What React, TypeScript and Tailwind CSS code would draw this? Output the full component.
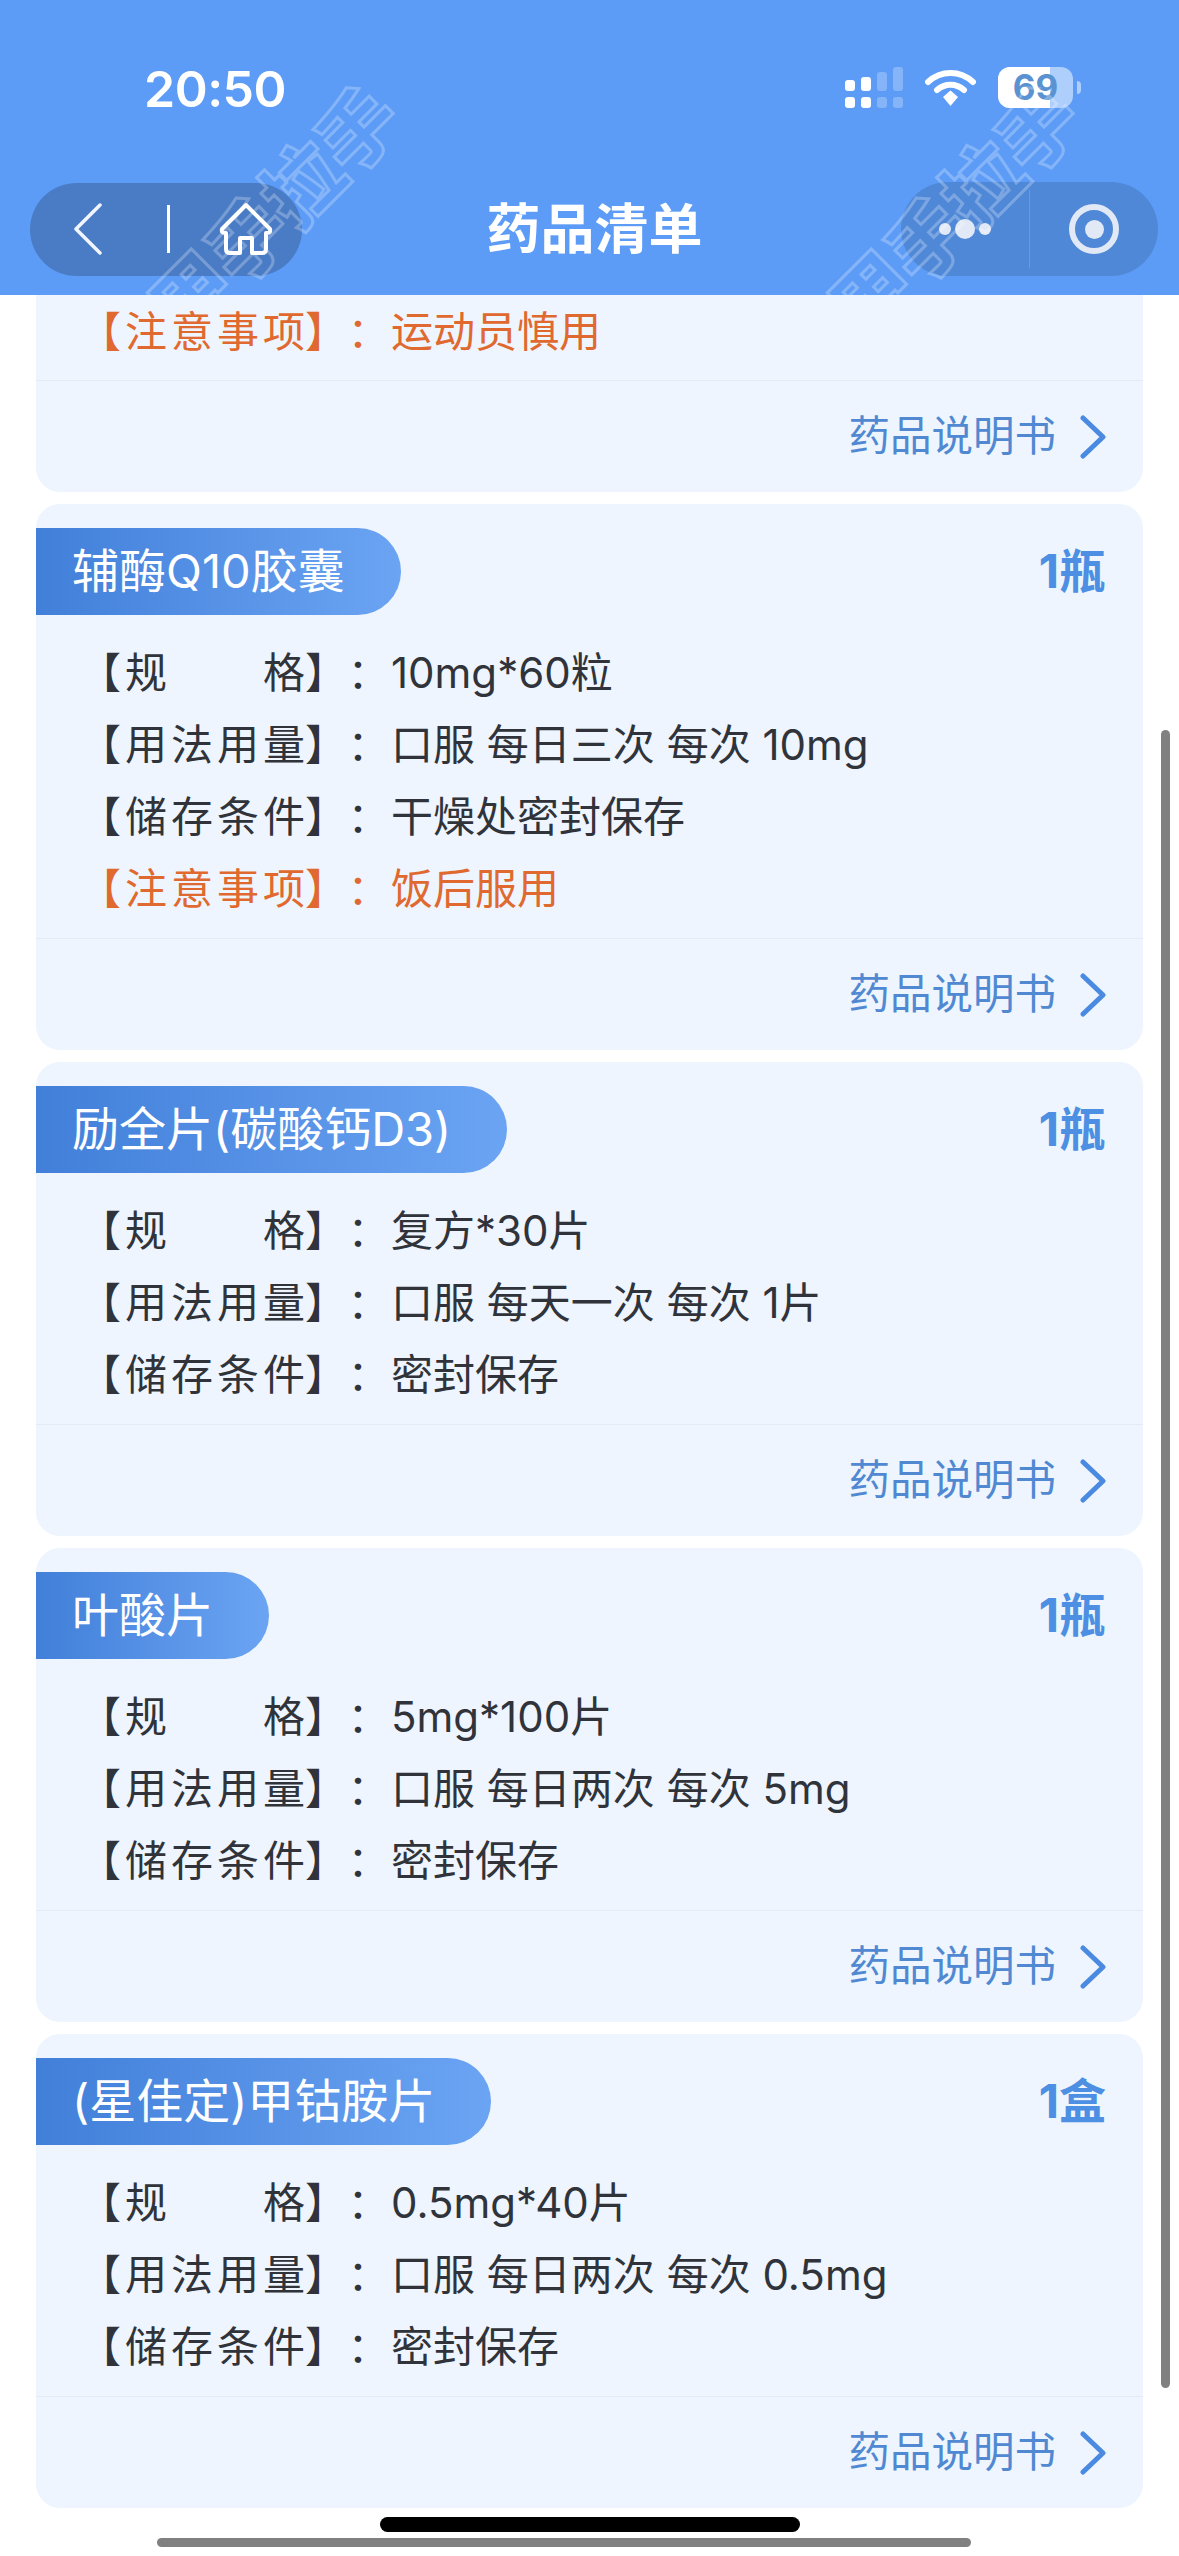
import React from 'react';

const FONT = "font-['Inter','Noto_Sans_CJK_SC',sans-serif]";

type Row = { label: string; value: string; warn?: boolean };
type Drug = { name: string; qty: string; rows: Row[] };

const drugs: Drug[] = [
  {
    name: '辅酶Q10胶囊',
    qty: '1瓶',
    rows: [
      { label: '【规　　格', value: '10mg*60粒' },
      { label: '【用法用量', value: '口服 每日三次 每次 10mg' },
      { label: '【储存条件', value: '干燥处密封保存' },
      { label: '【注意事项', value: '饭后服用', warn: true },
    ],
  },
  {
    name: '励全片(碳酸钙D3)',
    qty: '1瓶',
    rows: [
      { label: '【规　　格', value: '复方*30片' },
      { label: '【用法用量', value: '口服 每天一次 每次 1片' },
      { label: '【储存条件', value: '密封保存' },
    ],
  },
  {
    name: '叶酸片',
    qty: '1瓶',
    rows: [
      { label: '【规　　格', value: '5mg*100片' },
      { label: '【用法用量', value: '口服 每日两次 每次 5mg' },
      { label: '【储存条件', value: '密封保存' },
    ],
  },
  {
    name: '(星佳定)甲钴胺片',
    qty: '1盒',
    rows: [
      { label: '【规　　格', value: '0.5mg*40片' },
      { label: '【用法用量', value: '口服 每日两次 每次 0.5mg' },
      { label: '【储存条件', value: '密封保存' },
    ],
  },
];

const InfoRow = ({ label, value, warn }: Row) => (
  <div className={`flex h-[72px] items-center pl-[43px] text-[42px] ${warn ? 'text-[#e0692f]' : 'text-[#30343a]'}`}>
    <span className="w-[258px] shrink-0 whitespace-pre">
      <span className="tracking-[4px]">{label}</span>
      <span className="-ml-[4px]">】</span>
    </span>
    <span className="w-[42px] shrink-0 text-center font-['Noto_Sans_CJK_TC',sans-serif]">：</span>
    <span className="pl-[12px] whitespace-pre">{value}</span>
  </div>
);

const LinkRow = () => (
  <div className="flex h-[112px] items-center justify-end gap-[24px] border-t border-[#e5ebf4] pr-[37px]">
    <span className="text-[41.5px] text-[#5089d2]">药品说明书</span>
    <svg width="26" height="44" viewBox="0 0 26 44" fill="none">
      <path d="M3 3 L23 22 L3 41" stroke="#4a8ae0" strokeWidth="5" strokeLinecap="round" strokeLinejoin="round" />
    </svg>
  </div>
);

const DrugCard = ({ drug }: { drug: Drug }) => (
  <div className="mt-[12px] overflow-hidden rounded-[24px] bg-[#eef5fe]">
    <div className="flex items-center justify-between pt-[24px] pr-[37px]">
      <div className="flex h-[87px] items-center rounded-r-[44px] bg-gradient-to-r from-[#417fd9] to-[#6ba4f3] pr-[56px] pl-[36px] text-[47px] text-white">
        {drug.name}
      </div>
      <span className="text-[47px] font-bold text-[#4c8fe3]">{drug.qty}</span>
    </div>
    <div className="pt-[21px] pb-[14px]">
      {drug.rows.map((r) => (
        <InfoRow key={r.label} {...r} />
      ))}
    </div>
    <LinkRow />
  </div>
);

const StatusIcons = () => (
  <div className="flex items-center">
    <svg width="58" height="41" viewBox="0 0 58 41" fill="white">
      <rect x="0" y="13" width="10" height="11" rx="3" />
      <rect x="16" y="10" width="10" height="14" rx="3" />
      <rect x="32" y="5" width="10" height="19" rx="3" fillOpacity="0.25" />
      <rect x="48" y="0" width="10" height="24" rx="3" fillOpacity="0.25" />
      <rect x="0" y="30" width="10" height="11" rx="3" />
      <rect x="16" y="30" width="10" height="11" rx="3" />
      <rect x="32" y="30" width="10" height="11" rx="3" fillOpacity="0.25" />
      <rect x="48" y="30" width="10" height="11" rx="3" fillOpacity="0.25" />
    </svg>
    <svg className="ml-[22px]" width="51" height="37" viewBox="0 0 51 37" fill="none">
      <path d="M3 13 C16 1 35 1 48 13" stroke="white" strokeWidth="6" strokeLinecap="round" />
      <path d="M12 21 C20 14 31 14 39 21" stroke="white" strokeWidth="6" strokeLinecap="round" />
      <path d="M18 28 L25.5 21.5 L33 28 L25.5 37 Z" fill="white" />
    </svg>
    <div className="relative ml-[22px] h-[41px] w-[75px] overflow-hidden rounded-[12px] bg-white/50">
      <div className="h-full w-[52px] bg-white" />
      <span className="absolute inset-0 flex items-center justify-center text-[35px] leading-none font-bold text-[#5b93d2]">69</span>
    </div>
    <div className="ml-[4px] h-[13px] w-[4px] rounded-r-full bg-white/50" />
  </div>
);

const LeftCapsule = () => (
  <div className="flex h-[93px] w-[272px] items-center rounded-full bg-[#4a7cc6]">
    <svg className="ml-[43px]" width="30" height="52" viewBox="0 0 30 52" fill="none">
      <path d="M27 2 L3 26 L27 50" stroke="#f2f6fc" strokeWidth="3.5" strokeLinecap="round" strokeLinejoin="round" />
    </svg>
    <div className="ml-[64px] h-[48px] w-[3px] bg-white" />
    <svg className="ml-[49px]" width="54" height="54" viewBox="0 0 54 54" fill="none">
      <path
        d="M27 3 L51 27 Q52 31 48 31 L47 31 L47 47 Q47 51 43 51 L33 51 L33 36 L21 36 L21 51 L11 51 Q7 51 7 47 L7 31 L6 31 Q2 31 3 27 Z"
        stroke="white"
        strokeWidth="4"
        strokeLinejoin="round"
      />
    </svg>
  </div>
);

const RightCapsule = () => (
  <div className="flex h-[94px] w-[257px] items-center rounded-full bg-[#5088d8]">
    <div className="flex flex-1 items-center justify-center gap-[4px]">
      <div className="h-[12px] w-[12px] rounded-full bg-[#e2e9f6]" />
      <div className="h-[20px] w-[20px] rounded-full bg-[#e2e9f6]" />
      <div className="h-[12px] w-[12px] rounded-full bg-[#e2e9f6]" />
    </div>
    <div className="h-[78px] w-px bg-white/15" />
    <div className="flex flex-1 items-center justify-center">
      <div className="flex h-[50px] w-[50px] items-center justify-center rounded-full border-[6px] border-[#e2e9f6]">
        <div className="h-[19px] w-[19px] rounded-full bg-[#e2e9f6]" />
      </div>
    </div>
  </div>
);

const Watermark = ({ className }: { className: string }) => (
  <span
    className={`absolute -rotate-45 whitespace-nowrap text-[78px] leading-none font-black text-transparent [-webkit-text-stroke:3px_rgba(255,255,255,0.25)] ${className}`}
  >
    甲手拉手
  </span>
);

const Header = () => (
  <header className="relative h-[295px] shrink-0 overflow-hidden bg-[#5c9cf6] text-white">
    <div className="flex h-[41px] translate-y-[68px] items-center justify-between pr-[98px] pl-[144px]">
      <span className="text-[50px] leading-none font-semibold tracking-[-0.5px]">20:50</span>
      <div className="-translate-y-[1px]">
        <StatusIcons />
      </div>
    </div>
    <div className="mt-[141px] flex items-center pr-[21px] pl-[30px]">
      <LeftCapsule />
      <div className="flex-1 pr-[14px] text-center text-[54px] font-bold">药品清单</div>
      <RightCapsule />
    </div>
    <Watermark className="top-[174px] left-[120px]" />
    <Watermark className="top-[174px] left-[800px]" />
  </header>
);

export default function App() {
  return (
    <div className={`relative h-[2556px] w-[1179px] overflow-hidden bg-white ${FONT}`}>
      <Header />
      <main className="px-[36px]">
        <div className="overflow-hidden rounded-b-[24px] bg-[#eef5fe]">
          <div className="pb-[13px]">
            <InfoRow label="【注意事项" value="运动员慎用" warn />
          </div>
          <LinkRow />
        </div>
        {drugs.map((d) => (
          <DrugCard key={d.name} drug={d} />
        ))}
      </main>
      {/* phone home bar + page scrollbars */}
      <div className="absolute top-[2517px] left-[380px] h-[15px] w-[420px] rounded-full bg-black" />
      <div className="absolute top-[2538px] left-[157px] h-[9px] w-[814px] rounded-full bg-[#808080]" />
      <div className="absolute top-[730px] left-[1161px] h-[1658px] w-[9px] rounded-full bg-[#808080]" />
    </div>
  );
}
